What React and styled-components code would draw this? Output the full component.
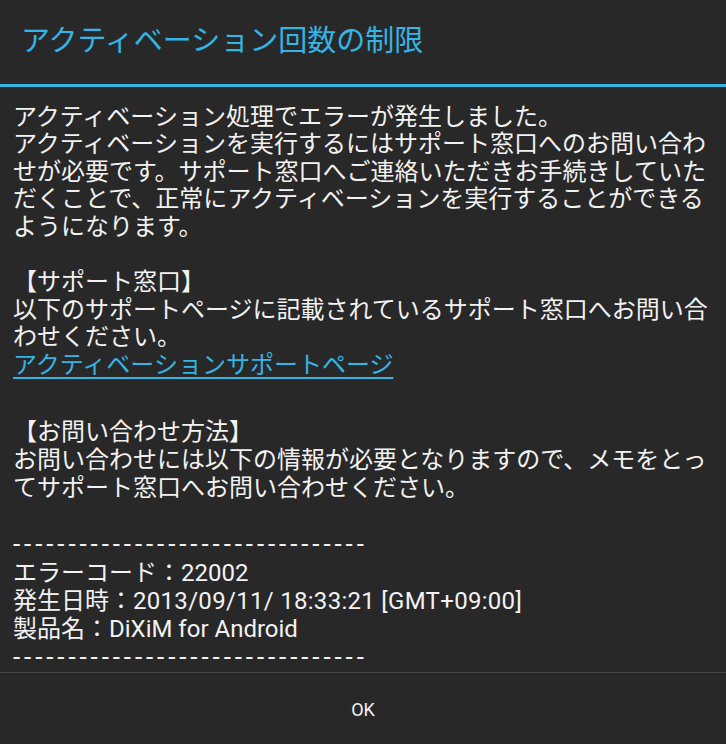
import React from "react"
import styled, { createGlobalStyle } from "styled-components"

const GlobalStyle = createGlobalStyle`
    html, body {
        margin: 0;
        padding: 0;
        background: #282828;
    }
`;

const Dialog = styled.div`
    width: 726px;
    height: 744px;
    display: flex;
    flex-direction: column;
    background: #282828;
    font-family: Roboto, "Noto Sans CJK JP", sans-serif;
    color: #f2f2f2;
    overflow: hidden;
`;

//Cabeçalho
const Header = styled.div`
    height: 84px;
    display: flex;
    align-items: center;
    padding-left: 21px;
    border-bottom: 3px solid #33b5e5;
`;

const Title = styled.h1`
    margin: 0;
    font-size: 29px;
    font-weight: 400;
    color: #33b5e5;
    line-height: 1;
`;

//Corpo da mensagem
const Body = styled.div`
    flex: 1;
    padding: 17px 12px 0 13px;
    font-size: 24px;
`;

const Para = styled.p`
    margin: ${({ $top }) => $top || "0"} 0 0 0;
    line-height: ${({ $lh }) => $lh || "27.6px"};
    white-space: pre-line;
`;

const SupportLink = styled.a`
    color: #33b5e5;
    text-decoration: underline;
    text-decoration-thickness: 2px;
    text-underline-offset: 4px;
`;

const Dashes = styled.span`
    font-size: 26px;
    letter-spacing: 3.9px;
`;

const Latin = styled.span`
    letter-spacing: 0.3px;
`;

//Rodapé
const Footer = styled.div`
    height: 71px;
    border-top: 1px solid #464646;
    display: flex;
    align-items: center;
    justify-content: center;
`;

const OkButton = styled.button`
    background: none;
    border: none;
    color: #f2f2f2;
    font-family: Roboto, sans-serif;
    font-size: 18px;
    padding: 0;
    margin-top: 2px;
`;

const DASH = "-".repeat(32);

export default function App() {
    return (
        <>
            <GlobalStyle />
            <Dialog>
                <Header>
                    <Title>アクティベーション回数の制限</Title>
                </Header>
                <Body>
                    <Para>
                        {"アクティベーション処理でエラーが発生しました。\n" +
                            "アクティベーションを実行するにはサポート窓口へのお問い合わ\n" +
                            "せが必要です。サポート窓口へご連絡いただきお手続きしていた\n" +
                            "だくことで、正常にアクティベーションを実行することができる\n" +
                            "ようになります。\n" +
                            "\u00a0\n" +
                            "【サポート窓口】\n" +
                            "以下のサポートページに記載されているサポート窓口へお問い合\n" +
                            "わせください。\n"}
                        <SupportLink href="#">アクティベーションサポートページ</SupportLink>
                    </Para>
                    <Para $top="38px" $lh="28.1px">
                        {"【お問い合わせ方法】\n" +
                            "お問い合わせには以下の情報が必要となりますので、メモをとっ\n" +
                            "てサポート窓口へお問い合わせください。\n" +
                            "\u00a0\n"}
                        <Dashes>{DASH}</Dashes>
                        {"\nエラーコード：22002\n発生日時："}
                        <Latin>2013/09/11/ 18:33:21 [GMT+09:00]</Latin>
                        {"\n製品名：DiXiM for Android\n"}
                        <Dashes>{DASH}</Dashes>
                    </Para>
                </Body>
                <Footer>
                    <OkButton>OK</OkButton>
                </Footer>
            </Dialog>
        </>
    );
}
